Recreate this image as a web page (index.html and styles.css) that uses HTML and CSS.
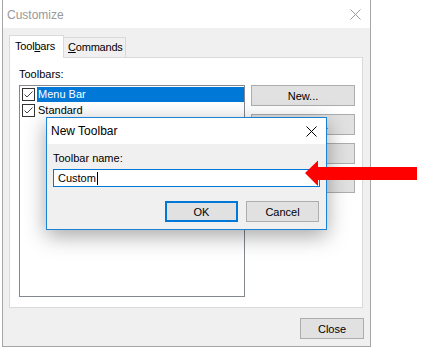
FILE: index.html
```html
<!DOCTYPE html>
<html lang="en">
<head>
  <meta charset="UTF-8">
  <title>Customize</title>
  <link rel="stylesheet" href="styles.css">
</head>
<body>
  <div class="window">
    <div class="titlebar">
      <span class="title">Customize</span>
      <svg class="x-icon" width="11" height="11" viewBox="0 0 11 11"><path d="M0.5 0.5 L10.5 10.5 M10.5 0.5 L0.5 10.5" stroke="#9a9a9a" stroke-width="1" fill="none"/></svg>
    </div>
    <div class="content">
      <div class="tabs">
        <div class="tab active">Tool<u>b</u>ars</div>
        <div class="tab"><u>C</u>ommands</div>
      </div>
      <div class="panel">
        <div class="label">Toolbars:</div>
        <div class="panel-row">
          <div class="listbox">
            <div class="item">
              <svg class="check" width="13" height="13" viewBox="0 0 13 13"><rect x="0.5" y="0.5" width="12" height="12" fill="#fff" stroke="#333"/><path d="M2.5 6.5 L5 9 L10.5 3.5" stroke="#444" stroke-width="1" fill="none"/></svg>
              <span class="item-text selected">Menu Bar</span>
            </div>
            <div class="item">
              <svg class="check" width="13" height="13" viewBox="0 0 13 13"><rect x="0.5" y="0.5" width="12" height="12" fill="#fff" stroke="#333"/><path d="M2.5 6.5 L5 9 L10.5 3.5" stroke="#444" stroke-width="1" fill="none"/></svg>
              <span class="item-text">Standard</span>
            </div>
          </div>
          <div class="side-buttons">
            <button class="btn">New...</button>
            <button class="btn">Rename...</button>
            <button class="btn">Delete</button>
            <button class="btn">Reset...</button>
          </div>
        </div>
      </div>
      <div class="footer">
        <button class="btn close-btn">Close</button>
      </div>
    </div>
  </div>

  <!-- modal over the Customize window -->
  <div class="dialog">
    <div class="dialog-title">
      <span>New Toolbar</span>
      <svg class="x-icon" width="11" height="11" viewBox="0 0 11 11"><path d="M0.5 0.5 L10.5 10.5 M10.5 0.5 L0.5 10.5" stroke="#000" stroke-width="1" fill="none"/></svg>
    </div>
    <div class="dialog-body">
      <div class="label">Toolbar name:</div>
      <div class="name-input">Custom<span class="caret"></span></div>
      <div class="dialog-buttons">
        <button class="btn default">OK</button>
        <button class="btn">Cancel</button>
      </div>
    </div>
  </div>

  <svg class="arrow" width="114" height="29" viewBox="0 0 114 29">
    <polygon points="1,14 14,1.5 14,8 113,8 113,21 14,21 14,27" fill="#ff0000"/>
  </svg>
</body>
</html>
```

FILE: styles.css
```css
body {
  margin: 0;
  width: 423px;
  height: 351px;
  background: #fff;
  font-family: "Liberation Sans", Arial, sans-serif;
  font-size: 11px;
  color: #000;
  position: relative;
  overflow: hidden;
}
.window {
  margin-left: 2px;
  width: 369px;
  height: 347px;
  box-sizing: border-box;
  border: 1px solid #a6a6a6;
  border-top: none;
  display: flex;
  flex-direction: column;
}
.titlebar {
  height: 28px;
  background: #fff;
  display: flex;
  align-items: center;
  justify-content: space-between;
  padding: 1px 9px 0 4px;
  box-sizing: border-box;
}
.title {
  font-size: 12px;
  color: #999;
}
.content {
  flex: 1;
  background: #f0f0f0;
  padding: 0 7px 0 6px;
}
.tabs {
  display: flex;
  align-items: flex-end;
  margin-top: 7px;
  height: 22px;
}
.tab {
  height: 20px;
  box-sizing: border-box;
  border: 1px solid #d9d9d9;
  border-bottom: none;
  border-left: none;
  padding: 3px 2px 0 4px;
  background: #f0f0f0;
  letter-spacing: -0.2px;
}
.tab.active {
  height: 23px;
  border-left: 1px solid #d9d9d9;
  background: #fff;
  padding: 4px 8px 0 5px;
  margin-bottom: -1px;
  position: relative;
  z-index: 1;
}
.panel {
  height: 251px;
  box-sizing: border-box;
  border: 1px solid #d9d9d9;
  background: #fff;
  padding: 10px 0 0 9px;
}
.label {
  line-height: 13px;
}
.panel-row {
  display: flex;
  gap: 6px;
  margin-top: 4px;
}
.listbox {
  width: 226px;
  height: 212px;
  box-sizing: border-box;
  border: 1px solid #828790;
  padding-left: 2px;
}
.item {
  display: flex;
  align-items: center;
  height: 16px;
}
.check {
  margin-right: 2px;
  flex: none;
}
.item-text {
  flex: 1;
  line-height: 15px;
  padding-left: 1px;
}
.item-text.selected {
  background: #0078d7;
  color: #fff;
}
.side-buttons {
  display: flex;
  flex-direction: column;
  gap: 8px;
}
.btn {
  font-family: inherit;
  font-size: 11px;
  color: #000;
  background: #e1e1e1;
  border: 1px solid #adadad;
  height: 21px;
  padding: 0;
  box-sizing: border-box;
}
.side-buttons .btn {
  width: 104px;
}
.footer {
  display: flex;
  justify-content: flex-end;
  margin: 10px -1px 0 0;
}
.close-btn {
  width: 64px;
}
.dialog {
  position: absolute;
  left: 46px;
  top: 117px;
  width: 281px;
  height: 113px;
  box-sizing: border-box;
  border: 1px solid #1883d7;
  background: #f0f0f0;
  box-shadow: 0 6px 20px rgba(0, 0, 0, 0.35);
  z-index: 5;
}
.dialog-title {
  height: 26px;
  background: #fff;
  display: flex;
  align-items: center;
  justify-content: space-between;
  padding: 0 9px 0 4px;
  font-size: 12px;
}
.dialog-body {
  padding: 8px 0 0 6px;
}
.name-input {
  margin-top: 4px;
  width: 267px;
  height: 18px;
  box-sizing: border-box;
  border: 1px solid #0078d7;
  background: #fff;
  padding-left: 4px;
  line-height: 16px;
  display: flex;
  align-items: center;
}
.caret {
  display: inline-block;
  width: 0;
  height: 13px;
  border-left: 1px solid #000;
  margin-left: 1px;
}
.dialog-buttons {
  display: flex;
  justify-content: flex-end;
  gap: 8px;
  width: 266px;
  margin-top: 14px;
}
.dialog-buttons .btn {
  width: 73px;
}
.btn.default {
  border: 2px solid #0078d7;
}
.arrow {
  position: absolute;
  left: 304px;
  top: 159px;
  z-index: 6;
}
```
